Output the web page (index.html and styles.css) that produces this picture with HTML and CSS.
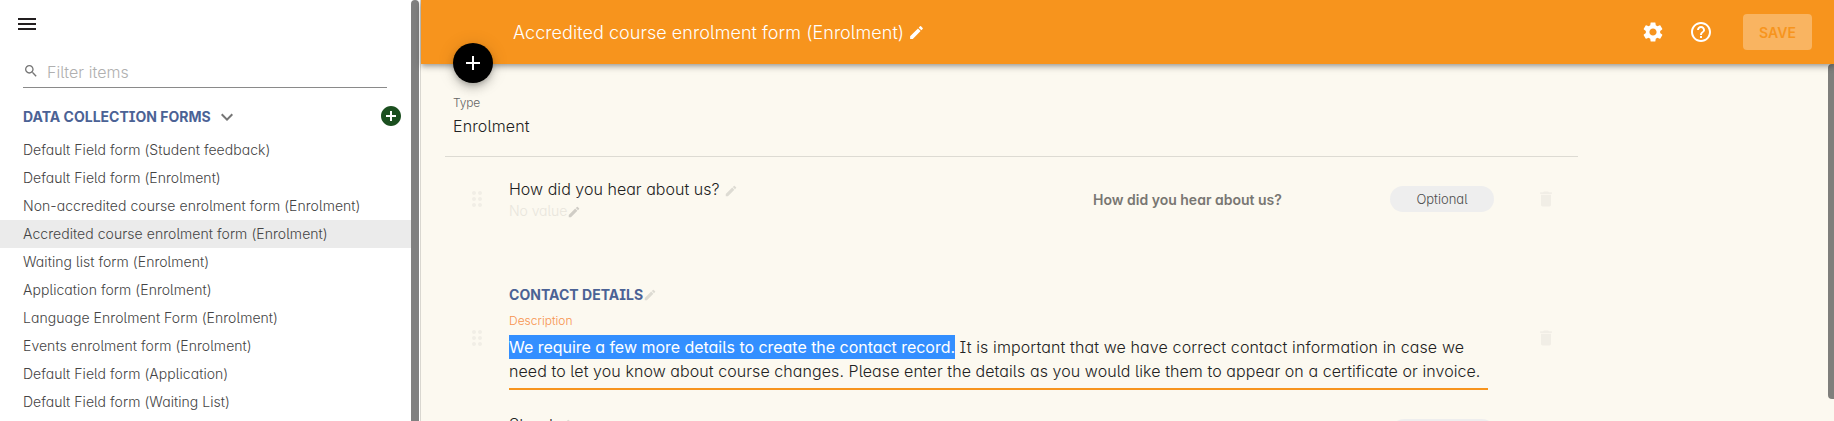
FILE: index.html
```html
<!DOCTYPE html>
<html lang="en">
<head>
<meta charset="utf-8">
<title>Data collection forms</title>
<link rel="stylesheet" href="styles.css">
</head>
<body>
<svg class="defs" width="0" height="0">
  <symbol id="pencil" viewBox="0 0 24 24"><path d="M3 17.25V21h3.75L17.81 9.94l-3.75-3.75L3 17.25zM20.71 7.04c.39-.39.39-1.02 0-1.41l-2.34-2.34a.9959.9959 0 0 0-1.41 0l-1.83 1.83 3.75 3.75 1.83-1.83z"/></symbol>
  <symbol id="trash" viewBox="0 0 24 24"><path d="M6 19c0 1.100.9 2 2 2h8c1.100 0 2-.9 2-2V7H6v12zM19 4h-3.500l-1-1h-5l-1 1H5v2h14V4z"/></symbol>
  <symbol id="drag" viewBox="0 0 24 24"><path d="M11 18c0 1.100-.9 2-2 2s-2-.9-2-2 .9-2 2-2 2 .9 2 2zm-2-8c-1.100 0-2 .9-2 2s.9 2 2 2 2-.9 2-2-.9-2-2-2zm0-6c-1.100 0-2 .9-2 2s.9 2 2 2 2-.9 2-2-.9-2-2-2zm6 4c1.100 0 2-.9 2-2s-.9-2-2-2-2 .9-2 2 .9 2 2 2zm0 2c-1.100 0-2 .9-2 2s.9 2 2 2 2-.9 2-2-.9-2-2-2zm0 6c-1.100 0-2 .9-2 2s.9 2 2 2 2-.9 2-2-.9-2-2-2z"/></symbol>
</svg>
<div class="app">
  <aside class="sidebar">
    <div class="panel">
      <svg class="menu" viewBox="0 0 24 24"><path d="M3 18h18v-2H3v2zm0-5h18v-2H3v2zm0-7v2h18V6H3z"/></svg>
      <div class="filter">
        <svg class="search" viewBox="0 0 24 24"><path d="M15.500 14h-.79l-.28-.27C15.410 12.590 16 11.110 16 9.500 16 5.910 13.090 3 9.500 3S3 5.910 3 9.500 5.910 16 9.500 16c1.610 0 3.090-.59 4.230-1.570l.27.28v.79l5 4.990L20.490 19l-4.990-5zm-6 0C7.010 14 5 11.990 5 9.500S7.010 5 9.500 5 14 7.010 14 9.500 11.990 14 9.500 14z"/></svg>
        <span>Filter items</span>
      </div>
      <div class="group">
        <span class="heading">DATA COLLECTION FORMS</span>
        <svg class="chevron" viewBox="0 0 24 24"><path d="M7.410 8.590 12 13.170l4.590-4.580L18 10l-6 6-6-6 1.410-1.410z"/></svg>
        <svg class="add" viewBox="0 0 24 24"><path d="M12 2C6.480 2 2 6.480 2 12s4.480 10 10 10 10-4.480 10-10S17.520 2 12 2zm5 11h-4v4h-2v-4H7v-2h4V7h2v4h4v2z"/></svg>
      </div>
      <ul class="forms">
        <li>Default Field form (Student feedback)</li>
        <li>Default Field form (Enrolment)</li>
        <li>Non-accredited course enrolment form (Enrolment)</li>
        <li class="active">Accredited course enrolment form (Enrolment)</li>
        <li>Waiting list form (Enrolment)</li>
        <li>Application form (Enrolment)</li>
        <li>Language Enrolment Form (Enrolment)</li>
        <li>Events enrolment form (Enrolment)</li>
        <li>Default Field form (Application)</li>
        <li>Default Field form (Waiting List)</li>
      </ul>
    </div>
    <div class="side-scroll"></div>
  </aside>
  <main class="main">
    <header class="bar">
      <h1 class="title">Accredited course enrolment form (Enrolment)</h1>
      <svg class="title-pencil"><use href="#pencil"/></svg>
      <svg class="gear" viewBox="0 0 24 24"><path d="M19.140 12.940c.04-.3.06-.61.06-.94 0-.32-.02-.64-.07-.94l2.030-1.580c.18-.14.23-.41.12-.61l-1.920-3.320c-.12-.22-.37-.29-.59-.22l-2.390.96c-.5-.38-1.030-.7-1.620-.94l-.36-2.540c-.04-.24-.24-.41-.48-.41h-3.840c-.24 0-.43.17-.47.41l-.36 2.540c-.59.24-1.130.57-1.620.94l-2.390-.96c-.22-.08-.47 0-.59.22L2.740 8.870c-.12.21-.08.47.12.61l2.030 1.580c-.05.3-.09.63-.09.94s.02.64.07.94l-2.030 1.580c-.18.14-.23.41-.12.61l1.920 3.320c.12.22.37.29.59.22l2.390-.96c.5.38 1.030.7 1.620.94l.36 2.540c.05.24.24.41.48.41h3.840c.24 0 .44-.17.47-.41l.36-2.540c.59-.24 1.130-.56 1.620-.94l2.390.96c.22.08.47 0 .59-.22l1.920-3.320c.12-.22.07-.47-.12-.61l-2.010-1.580zM12 15.600c-1.980 0-3.600-1.620-3.600-3.600s1.620-3.600 3.600-3.600 3.600 1.620 3.600 3.600-1.620 3.600-3.600 3.600z"/></svg>
      <svg class="help" viewBox="0 0 24 24"><path d="M11 18h2v-2h-2v2zm1-16C6.480 2 2 6.480 2 12s4.480 10 10 10 10-4.480 10-10S17.520 2 12 2zm0 18c-4.410 0-8-3.590-8-8s3.590-8 8-8 8 3.590 8 8-3.590 8-8 8zm0-14c-2.210 0-4 1.790-4 4h2c0-1.100.9-2 2-2s2 .9 2 2c0 2-3 1.750-3 5h2c0-2.250 3-2.500 3-5 0-2.210-1.790-4-4-4z"/></svg>
      <button class="save">SAVE</button>
      <button class="fab"><svg viewBox="0 0 24 24"><path d="M19 13h-6v6h-2v-6H5v-2h6V5h2v6h6v2z"/></svg></button>
    </header>
    <div class="body">
      <div class="content">
        <section class="type">
          <div class="label">Type</div>
          <div class="value">Enrolment</div>
        </section>
        <section class="row question">
          <svg class="drag"><use href="#drag"/></svg>
          <div class="name">
            <div class="line">How did you hear about us?<svg class="pencil gap"><use href="#pencil"/></svg></div>
            <div class="line empty"><span>No value</span><svg class="pencil"><use href="#pencil"/></svg></div>
          </div>
          <div class="field-label">How did you hear about us?</div>
          <div class="pill">Optional</div>
          <svg class="trash"><use href="#trash"/></svg>
        </section>
        <section class="row contact">
          <svg class="drag"><use href="#drag"/></svg>
          <div class="details">
            <div class="line heading">CONTACT DETAILS<svg class="pencil"><use href="#pencil"/></svg></div>
            <div class="desc-label">Description</div>
            <div class="desc"><div class="first"><span class="selected">We require a few more details to create the contact record.</span> It is important that we have correct contact information in case we</div><div>need to let you know about course changes. Please enter the details as you would like them to appear on a certificate or invoice.</div></div>
          </div>
          <svg class="trash"><use href="#trash"/></svg>
        </section>
        <section class="row street">
          <div class="line">Street<svg class="pencil gap"><use href="#pencil"/></svg></div>
          <div class="pill"></div>
        </section>
      </div>
      <div class="main-scroll"></div>
    </div>
  </main>
</div>
</body>
</html>
```
FILE: styles.css
```css
* { box-sizing: border-box; }
html, body { margin: 0; height: 421px; overflow: hidden; }
body {
  font-family: Inter, "Open Sans", sans-serif;
  font-feature-settings: "cv11", "cv08", "cv05";
  font-size: 14px;
  font-weight: 300;
  color: #222;
  background: #fcf9f0;
}
svg { display: block; flex: none; fill: currentColor; }
.defs { position: absolute; }
.app { display: flex; height: 421px; overflow: hidden; }

/* Sidebar */
.sidebar { display: flex; flex: none; width: 421px; background: #fff; border-right: 1px solid #d9d7d0; }
.panel { width: 411px; }
.side-scroll { width: 8px; background: #808080; border-radius: 4px 4px 0 0; }
.menu { width: 24px; height: 24px; margin: 12px 0 0 15px; color: #231f20; }
.filter {
  display: flex; align-items: center;
  width: 364px; height: 34px; margin: 18px 0 0 23px;
  border-bottom: 1px solid #8a8a8a;
  font-size: 16px; letter-spacing: 0.07px; color: #b0b0b0;
}
.search { width: 16px; height: 16px; margin: 0 8px 0 0; color: #757575; }
.filter span { padding-top: 2px; }
.group { display: flex; align-items: center; height: 28px; margin: 14px 0 0 23px; }
.heading { font-weight: 700; color: #4b6295; }
.chevron { width: 24px; height: 24px; margin-left: 4px; color: #757575; position: relative; top: 1px; }
.add { width: 24px; height: 24px; margin: 0 8px 0 auto; color: #1b4f1f; }
.forms { list-style: none; margin: 6px 0 0; padding: 0; }
.forms li { height: 28px; padding-left: 23px; line-height: 28px; letter-spacing: 0.05px; color: #444; }
.forms .active { background: #ebebeb; }

/* Header */
.main { display: flex; flex-direction: column; flex: 1; min-width: 0; }
.bar {
  position: relative; z-index: 1;
  display: flex; align-items: center; flex: none;
  height: 64px; padding: 0 22px 0 92px;
  background: #f7941d; color: #fff;
  box-shadow: 0 2px 4px -1px rgba(0,0,0,.2), 0 4px 5px rgba(0,0,0,.14), 0 1px 10px rgba(0,0,0,.12);
}
.title { margin: 0; font-size: 18px; font-weight: 350; letter-spacing: 0.05px; white-space: nowrap; }
.title-pencil { width: 17px; height: 17px; margin: 1px 0 0 4px; }
.gear { width: 24px; height: 24px; margin-left: auto; }
.help { width: 24px; height: 24px; margin: 0 30px 0 24px; }
.save {
  width: 69px; height: 36px; padding: 0; border: 0; border-radius: 4px;
  background: #f9b461; color: #f7941d;
  font: 600 14px Inter, sans-serif;
}
.fab {
  position: absolute; left: 32px; top: 43px;
  display: flex; align-items: center; justify-content: center;
  width: 40px; height: 40px; padding: 0; border: 0; border-radius: 50%;
  background: #000; color: #fff;
  box-shadow: 0 3px 5px -1px rgba(0,0,0,.2), 0 6px 10px rgba(0,0,0,.14), 0 1px 18px rgba(0,0,0,.12);
}
.fab svg { width: 24px; height: 24px; }

/* Form body */
.body { display: flex; flex: 1; min-height: 0; }
.main-scroll { width: 6px; height: 335px; background: #7f7f7c; border-radius: 4px 0 0 4px; }
.content { width: 1133px; height: 357px; margin: 0 250px 0 24px; overflow: hidden; }
.type { height: 93px; padding: 31px 0 0 8px; border-bottom: 1px solid #dddbd3; }
.label { font-size: 12px; line-height: 16px; letter-spacing: -0.2px; color: #666; }
.value { margin-top: 3px; font-size: 16px; line-height: 24px; letter-spacing: 0.12px; }
.row { display: flex; }
.drag { width: 24px; height: 24px; color: #f1eee6; }
.trash { width: 20px; height: 20px; color: #f1eee6; }
.pencil { width: 14px; height: 14px; color: #dddbd3; }
.pencil.gap { margin: 3px 0 0 4px; }
.line { display: flex; align-items: center; font-size: 16px; line-height: 24px; letter-spacing: 0.03px; white-space: nowrap; }
.question { height: 124px; padding: 20px 0 0 20px; }
.question .drag { margin-top: 10px; }
.name { width: 584px; margin-left: 20px; }
.empty { font-size: 14px; line-height: 20px; letter-spacing: -0.08px; color: #e9e6dd; }
.empty .pencil { color: #d0cdc6; margin-top: 2px; }
.field-label { width: 297px; padding-top: 13px; line-height: 20px; font-weight: 600; color: #787672; }
.pill { width: 104px; height: 26px; border-radius: 13px; background: #eee; font-size: 13px; line-height: 26px; text-align: center; color: #4d4d4d; }
.question .pill { margin-top: 9px; }
.question .trash { margin: 12px 0 0 42px; }
.contact { height: 131px; padding: 2px 0 0 20px; }
.contact .drag { margin-top: 43px; }
.contact .trash { margin: 45px 0 0 48px; }
.details { width: 979px; margin-left: 20px; }
.details .heading { font-size: 14px; }
.desc-label { margin-top: 6px; font-size: 12px; line-height: 16px; color: #f7934f; }
.desc { height: 55px; margin-top: 6px; border-bottom: 2px solid #f7941d; font-size: 16px; line-height: 24px; letter-spacing: 0.07px; white-space: nowrap; }
.first { letter-spacing: 0.117px; }
.selected { display: inline-block; background: #338fff; color: #fff; font-weight: 400; letter-spacing: -0.033px; }
.street { height: 24px; padding: 0 0 0 64px; }
.street .line { width: 882px; height: 24px; letter-spacing: 0.2px; }
.street .pencil { margin-top: 1px; }
.street .pill { margin-top: 7px; }
```
